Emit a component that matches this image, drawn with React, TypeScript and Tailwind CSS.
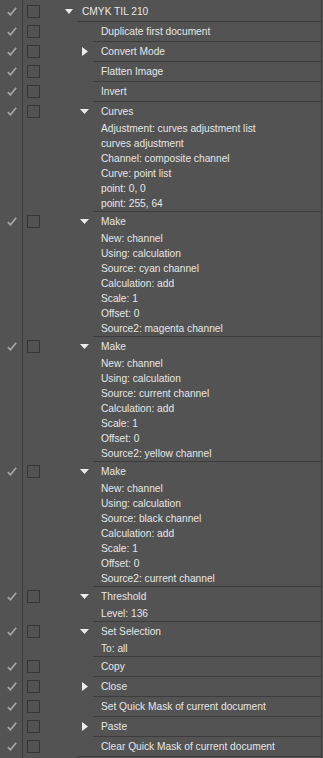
type Step = {
  title: string;
  arrow?: "down" | "right";
  details?: string[];
};

const steps: Step[] = [
  { title: "Duplicate first document" },
  { title: "Convert Mode", arrow: "right" },
  { title: "Flatten Image" },
  { title: "Invert" },
  {
    title: "Curves",
    arrow: "down",
    details: [
      "Adjustment: curves adjustment list",
      "curves adjustment",
      "Channel: composite channel",
      "Curve: point list",
      "point: 0, 0",
      "point: 255, 64",
    ],
  },
  {
    title: "Make",
    arrow: "down",
    details: [
      "New: channel",
      "Using: calculation",
      "Source: cyan channel",
      "Calculation: add",
      "Scale: 1",
      "Offset: 0",
      "Source2: magenta channel",
    ],
  },
  {
    title: "Make",
    arrow: "down",
    details: [
      "New: channel",
      "Using: calculation",
      "Source: current channel",
      "Calculation: add",
      "Scale: 1",
      "Offset: 0",
      "Source2: yellow channel",
    ],
  },
  {
    title: "Make",
    arrow: "down",
    details: [
      "New: channel",
      "Using: calculation",
      "Source: black channel",
      "Calculation: add",
      "Scale: 1",
      "Offset: 0",
      "Source2: current channel",
    ],
  },
  { title: "Threshold", arrow: "down", details: ["Level: 136"] },
  { title: "Set Selection", arrow: "down", details: ["To: all"] },
  { title: "Copy" },
  { title: "Close", arrow: "right" },
  { title: "Set Quick Mask of current document" },
  { title: "Paste", arrow: "right" },
  { title: "Clear Quick Mask of current document" },
];

const Check = () => (
  <svg width="10" height="9" viewBox="0 0 10 9" className="block">
    <path
      d="M0.8 5.2 L3.4 7.8 L9.2 0.8"
      fill="none"
      stroke="#a6a6a6"
      strokeWidth="1.7"
    />
  </svg>
);

const Box = () => (
  <div className="w-[13px] h-[13px] border border-[#363636]" />
);

const DownArrow = ({ w }: { w: number }) => (
  <svg width={w} height="5" viewBox={`0 0 ${w} 5`} className="block">
    <polygon points={`0,0 ${w},0 ${w / 2},5`} fill="#ececec" />
  </svg>
);

const RightArrow = () => (
  <svg width="6" height="9" viewBox="0 0 6 9" className="block">
    <polygon points="0,0 6,4.5 0,9" fill="#ececec" />
  </svg>
);

const LeftCols = ({ top = 0 }: { top?: number }) => (
  <>
    <div
      className="w-[23px] shrink-0 border-r border-[#3c3c3c] flex justify-center"
      style={{ paddingTop: top }}
    >
      <div className="h-[19px] flex items-center pl-[2px]">
        <Check />
      </div>
    </div>
    <div className="w-[22px] shrink-0 pl-[4px]" style={{ paddingTop: top }}>
      <div className="h-[19px] flex items-center">
        <Box />
      </div>
    </div>
  </>
);

const StepRow = ({ step, last }: { step: Step; last: boolean }) => (
  <div className="flex">
    <LeftCols />
    <div className="w-[32px] shrink-0" />
    <div className={`flex flex-1 ${last ? "border-b border-[#3c3c3c]" : ""}`}>
      <div className="w-[16px] shrink-0 h-[19px] flex items-center">
        {step.arrow === "down" && (
          <div className="pl-[3px]">
            <DownArrow w={9} />
          </div>
        )}
        {step.arrow === "right" && (
          <div className="pl-[5px]">
            <RightArrow />
          </div>
        )}
      </div>
      <div
        className={`flex-1 pl-[8px] ${last ? "" : "border-b border-[#3c3c3c]"}`}
      >
        <div className="h-[19px] leading-[19px]">{step.title}</div>
        {step.details?.map((d, i) => (
          <div key={i} className="h-[15px] leading-[15px]">
            {d}
          </div>
        ))}
      </div>
    </div>
  </div>
);

export default function App() {
  return (
    <div className="w-[323px] h-[758px] bg-[#535353] overflow-hidden">
      <div
        className="w-[322px] h-full border-r border-[#3c3c3c] text-[10.2px] text-[#e6e6e6]"
        style={{ fontFamily: '"Liberation Sans", Arial, sans-serif' }}
      >
        <div className="flex">
          <LeftCols top={2} />
          <div className="w-[32px] shrink-0 pt-[2px] pl-[20px]">
            <div className="h-[19px] flex items-center">
              <DownArrow w={8} />
            </div>
          </div>
          <div className="flex-1 pt-[2px] pl-[5px] border-b border-[#3c3c3c]">
            <div className="h-[19px] leading-[19px]">CMYK TIL 210</div>
          </div>
        </div>
        {steps.map((s, i) => (
          <StepRow key={i} step={s} last={i === steps.length - 1} />
        ))}
        <div className="flex h-full">
          <div className="w-[23px] shrink-0 border-r border-[#3c3c3c]" />
        </div>
      </div>
    </div>
  );
}
